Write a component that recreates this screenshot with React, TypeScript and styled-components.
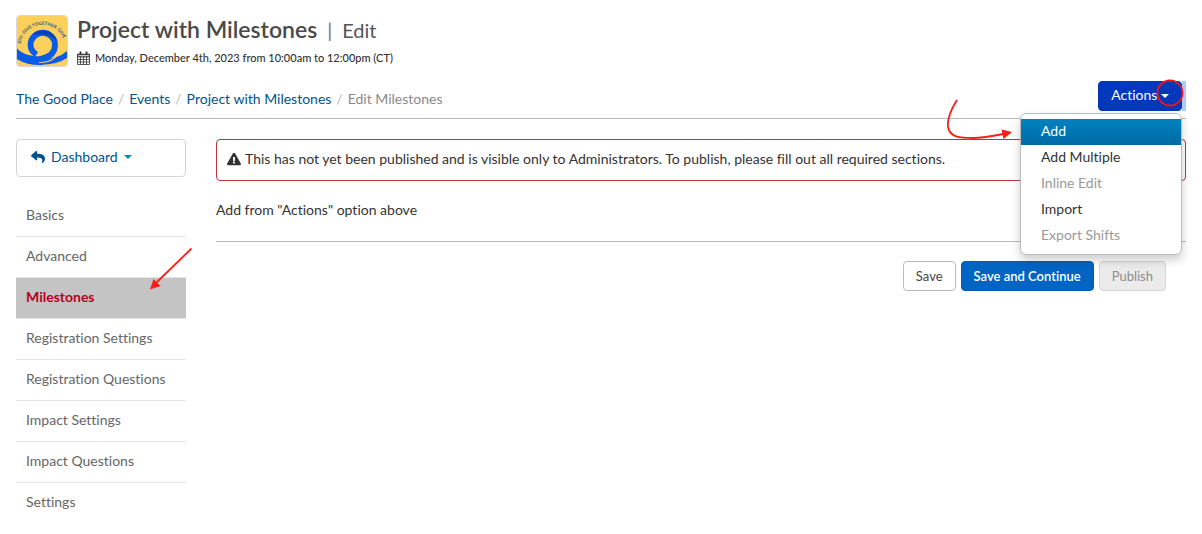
import React from "react";
import styled, { createGlobalStyle } from "styled-components";
import { FaExclamationTriangle, FaReply } from "react-icons/fa";

const GlobalStyle = createGlobalStyle`
  *, *::before, *::after { box-sizing: border-box; }
  body {
    margin: 0;
    background: #fff;
    color: #333;
    font-family: Lato, "Liberation Sans", sans-serif;
    font-size: 14px;
    font-variant-ligatures: none;
    line-height: 20px;
  }
  button { font: inherit; cursor: pointer; }
  a { color: #00538f; text-decoration: none; }
`;

const Page = styled.div`
  padding: 15px 16px;
`;

const Header = styled.header`
  display: flex;
  gap: 9px;
  height: 52px;
`;

const Logo = styled.svg`
  flex: none;
  width: 52px;
  height: 52px;
  border: 1px solid #d8d8d8;
  border-radius: 4px;
`;

const Title = styled.h1`
  margin: 0;
  font-size: 23px;
  font-weight: 600;
  line-height: 28px;
  color: #4a4a4a;
`;

const Divider = styled.span`
  margin: 0 10px;
  font-size: 20px;
  font-weight: 400;
  color: #777;
`;

const Mode = styled.span`
  font-size: 20px;
  font-weight: 400;
  color: #555;
`;

const DateLine = styled.p`
  display: flex;
  align-items: center;
  gap: 5px;
  margin: 4px 0 0;
  font-size: 11px;
  font-weight: 500;
`;

const Toolbar = styled.div`
  display: flex;
  align-items: center;
  justify-content: space-between;
  height: 52px;
  padding-top: 13px;
  padding-bottom: 7px;
  border-bottom: 1px solid #bbb;
`;

const Crumbs = styled.ol`
  display: flex;
  margin: 0;
  padding: 6px 0 0;
  list-style: none;
  color: #8a8a8a;

  li + li::before {
    content: "/";
    padding: 0 5px;
    color: #bbb;
  }
`;

const Actions = styled.div`
  position: relative;
  margin-right: 4px;
  box-shadow: 4px 0 0 #a9cdf8;
`;

const Caret = styled.span<{ $color: string }>`
  display: inline-block;
  border: 4px solid transparent;
  border-top-color: ${(p) => p.$color};
  border-bottom: 0;
  vertical-align: middle;
`;

const Button = styled.button<{ $kind: "action" | "primary" | "plain" | "muted" }>`
  display: block;
  height: 30px;
  padding: ${(p) => (p.$kind === "action" ? "0 12px 2px" : "0 12px")};
  font-size: ${(p) => (p.$kind === "action" ? 14 : 13)}px;
  white-space: nowrap;
  border-radius: 4px;
  border: 1px solid
    ${(p) => ({ action: "#0335ad", primary: "#005cb8", plain: "#bbb", muted: "#d4d4d4" })[p.$kind]};
  background: ${(p) => ({ action: "#0338bd", primary: "#0064c2", plain: "#fff", muted: "#ebebeb" })[p.$kind]};
  color: ${(p) => ({ action: "#fff", primary: "#fff", plain: "#444", muted: "#8c8c8c" })[p.$kind]};
  font-weight: ${(p) => (p.$kind === "primary" ? 600 : 400)};
`;

const Menu = styled.ul`
  position: absolute;
  z-index: 2;
  top: 32px;
  right: 0;
  width: 162px;
  margin: 0;
  padding: 5px 0;
  list-style: none;
  background: #fff;
  border: 1px solid #bbb;
  border-radius: 6px;
  box-shadow: 0 5px 10px rgba(0, 0, 0, 0.2);
`;

const MenuItem = styled.button<{ $active?: boolean }>`
  display: block;
  width: 100%;
  height: 26px;
  padding: 0 20px 2px;
  border: 0;
  text-align: left;
  color: ${(p) => (p.$active ? "#fff" : "#333")};
  background: ${(p) => (p.$active ? "linear-gradient(#0081c2, #006ba3)" : "transparent")};

  &:disabled { color: #999; }
`;

const Ring = styled.svg`
  position: absolute;
  z-index: 3;
  top: -2px;
  right: -2px;
  width: 28px;
  height: 28px;
  pointer-events: none;
`;

const MenuPointer = styled.svg`
  position: absolute;
  z-index: 3;
  top: 17px;
  right: 168px;
  width: 68px;
  height: 44px;
  pointer-events: none;
`;

const Columns = styled.div`
  display: grid;
  grid-template-columns: 170px minmax(0, 1fr);
  column-gap: 30px;
  margin-top: 20px;
`;

const Dashboard = styled.button`
  display: flex;
  align-items: center;
  gap: 6px;
  width: 100%;
  height: 38px;
  padding: 0 14px 2px;
  border: 1px solid #d5d5d5;
  border-radius: 4px;
  background: #fff;
  color: #00538f;
`;

const SectionList = styled.ul`
  margin: 19px 0 0;
  padding: 0;
  list-style: none;
`;

const SectionItem = styled.li`
  position: relative;
  border-bottom: 1px solid #e5e5e5;

  &:last-child { border-bottom: 0; }
`;

const SectionLink = styled.a<{ $current: boolean }>`
  display: block;
  padding: 9px 10px 11px;
  white-space: nowrap;
  color: ${(p) => (p.$current ? "#b8001c" : "#666")};
  background: ${(p) => (p.$current ? "#c4c4c4" : "transparent")};
  font-weight: ${(p) => (p.$current ? 700 : 400)};
`;

const SectionPointer = styled.svg`
  position: absolute;
  right: -8px;
  bottom: 26px;
  width: 46px;
  height: 46px;
  pointer-events: none;
`;

const Alert = styled.div`
  display: flex;
  align-items: center;
  gap: 4px;
  min-height: 42px;
  padding: 0 10px 2px;
  border: 1px solid #b5373d;
  border-radius: 4px;
`;

const Hint = styled.p`
  margin: 0;
  padding: 19px 0 21px;
  border-bottom: 1px solid #bbb;
`;

const FormButtons = styled.div`
  display: flex;
  justify-content: flex-end;
  gap: 5px;
  padding: 19px 20px 0;
`;

const crumbs = ["The Good Place", "Events", "Project with Milestones"];

const menu = [
  { label: "Add", active: true },
  { label: "Add Multiple" },
  { label: "Inline Edit", disabled: true },
  { label: "Import" },
  { label: "Export Shifts", disabled: true },
];

const sections = [
  "Basics",
  "Advanced",
  "Milestones",
  "Registration Settings",
  "Registration Questions",
  "Impact Settings",
  "Impact Questions",
  "Settings",
];

function OrgLogo() {
  return (
    <Logo viewBox="0 0 50 50" role="img" aria-label="The Good Place">
      <rect width="50" height="50" fill="#fdd05c" />
      <path id="motto" d="M3.500 28 A22.500 22.500 0 0 1 48 28" fill="none" />
      <text fontSize="4.500" fontWeight="700" fill="#23507f">
        <textPath href="#motto">JOY. GIVE TOGETHER. GIVE</textPath>
      </text>
      <g fill="none" stroke="#0a5be6">
        <path d="M-2 39 C8 46 18 47 26 46.500" strokeWidth="5" />
        <path d="M53 36 C46 43 36 46 24 46" strokeWidth="5.500" />
        <path d="M22 46.500 C31 46.500 38 43 41 38" stroke="#fdd05c" strokeWidth="1.200" />
        <path d="M-2 34.500 C5 41.500 16 44.500 25 42.500 C34 40.500 38 36 38 29 A12.200 12.200 0 0 0 13.500 29 C13.500 33 15.500 36 19.500 38.500" strokeWidth="5.800" />
      </g>
      <path d="M15 19 C18 16 22 14.500 26 14.500 C33 14.500 39 19 40.500 26 C36 20 30 17.500 15 19 Z" fill="#0b3fb4" />
    </Logo>
  );
}

function CalendarIcon() {
  return (
    <svg width="13" height="14" viewBox="0 0 13 14" fill="none" stroke="#333" aria-hidden="true">
      <path d="M.5 3.500h12v10H.5zM.5 6h12M.5 8.500h12M.5 11h12M3.500 6v7.500M6.500 6v7.500M9.500 6v7.500" strokeWidth=".8" />
      <path d="M.5 3.200h12v2H.5z" strokeWidth=".9" />
      <path d="M3.500 .5v3.500M9.500 .5v3.500" strokeWidth="1.8" />
    </svg>
  );
}

export default function App() {
  return (
    <>
      <GlobalStyle />
      <Page>
        <Header>
          <OrgLogo />
          <div>
            <Title>
              Project with Milestones<Divider>|</Divider>
              <Mode>Edit</Mode>
            </Title>
            <DateLine>
              <CalendarIcon />
              Monday, December 4th, 2023 from 10:00am to 12:00pm (CT)
            </DateLine>
          </div>
        </Header>

        <Toolbar>
          <nav aria-label="Breadcrumb">
            <Crumbs>
              {crumbs.map((name) => (
                <li key={name}>
                  <a href="#">{name}</a>
                </li>
              ))}
              <li aria-current="page">Edit Milestones</li>
            </Crumbs>
          </nav>
          <Actions>
            <Button $kind="action" aria-haspopup="true" aria-expanded="true">
              Actions <Caret $color="#fff" />
            </Button>
            <Menu>
              {menu.map((item) => (
                <li key={item.label}>
                  <MenuItem $active={item.active} disabled={item.disabled}>
                    {item.label}
                  </MenuItem>
                </li>
              ))}
            </Menu>
            <Ring viewBox="0 0 28 28" aria-hidden="true">
              <circle cx="14" cy="14" r="12.5" fill="none" stroke="#f3131c" strokeWidth="1.8" />
            </Ring>
            <MenuPointer viewBox="0 0 68 44" aria-hidden="true">
              <path d="M11 2C5 11 1 22 2 29C4 40 15 40 27 40C37 40 47 38 57 36" fill="none" stroke="#fb1d17" strokeWidth="1.8" />
              <path d="M66 34L55.500 31.500L57.500 41Z" fill="#fb1d17" />
            </MenuPointer>
          </Actions>
        </Toolbar>

        <Columns>
          <aside>
            <Dashboard aria-haspopup="true">
              <FaReply size={14} aria-hidden="true" />
              Dashboard
              <Caret $color="#0088cc" />
            </Dashboard>
            <SectionList>
              {sections.map((name) => (
                <SectionItem key={name}>
                  <SectionLink href="#" $current={name === "Milestones"}>
                    {name}
                  </SectionLink>
                  {name === "Milestones" && (
                    <SectionPointer viewBox="0 0 46 46" aria-hidden="true">
                      <path d="M43.500 2.500L8 37" stroke="#fb1d17" strokeWidth="1.8" />
                      <path d="M2 43.500L5.500 33L12.500 40Z" fill="#fb1d17" />
                    </SectionPointer>
                  )}
                </SectionItem>
              ))}
            </SectionList>
          </aside>

          <main>
            <Alert role="alert">
              <FaExclamationTriangle size={14} aria-hidden="true" />
              This has not yet been published and is visible only to Administrators. To publish, please fill out
              all required sections.
            </Alert>
            <Hint>Add from "Actions" option above</Hint>
            <FormButtons>
              <Button $kind="plain">Save</Button>
              <Button $kind="primary">Save and Continue</Button>
              <Button $kind="muted" disabled>
                Publish
              </Button>
            </FormButtons>
          </main>
        </Columns>
      </Page>
    </>
  );
}
